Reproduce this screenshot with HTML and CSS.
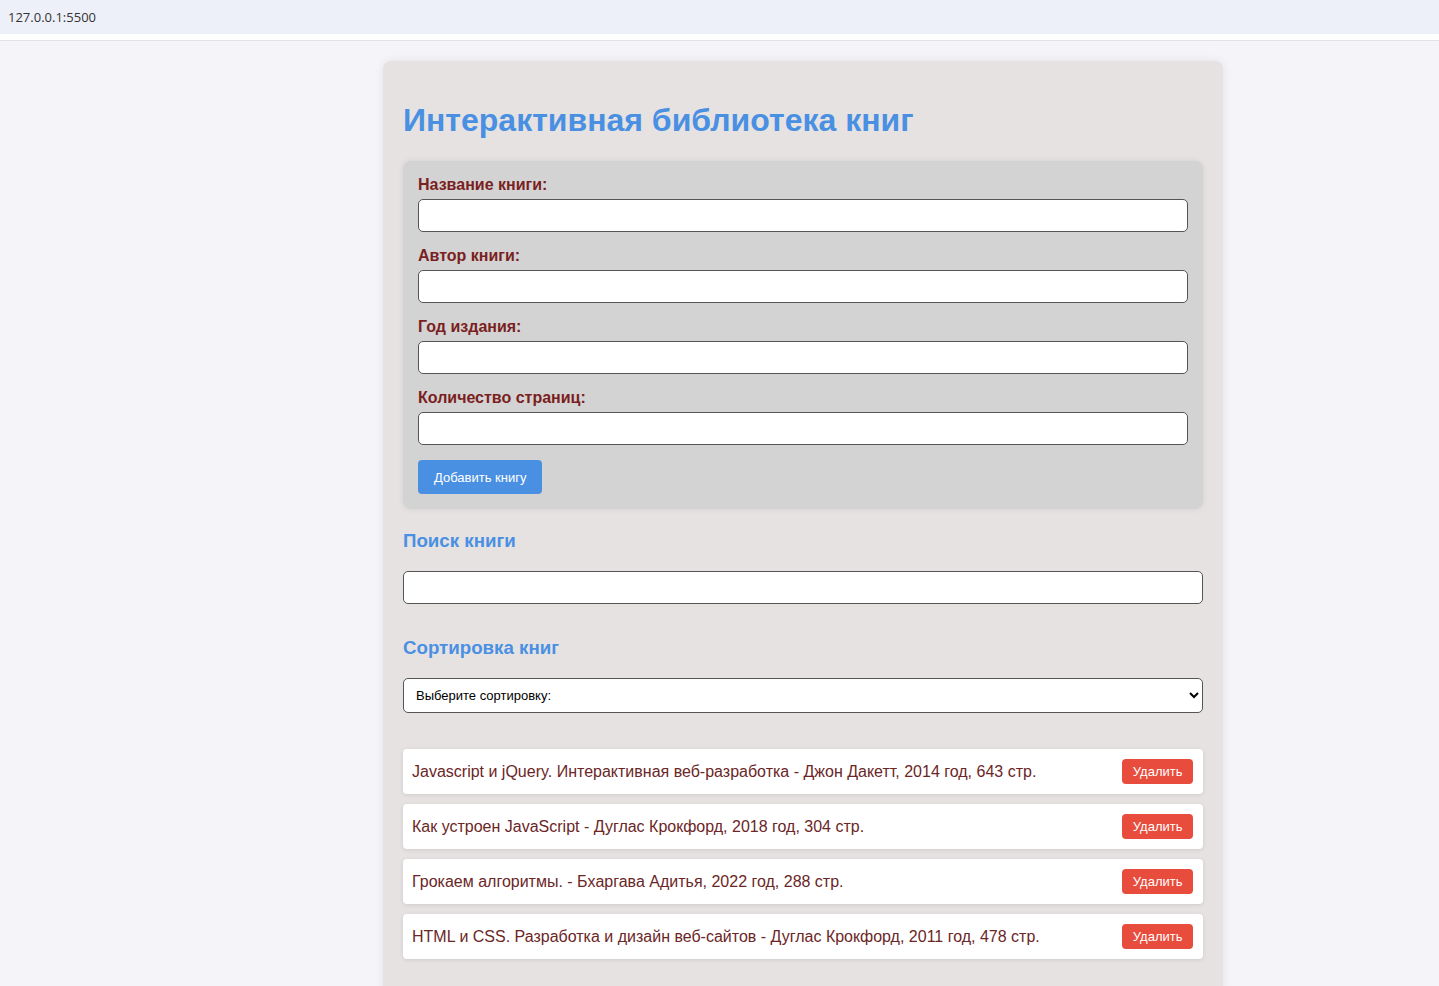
FILE: index.html
```html
<!DOCTYPE html>
<html lang="ru">
<head>
<meta charset="utf-8">
<title>Интерактивная библиотека книг</title>
<link rel="stylesheet" href="styles.css">
</head>
<body>
<div class="addressbar"><span class="url">127.0.0.1:5500</span></div>
<div class="page">
  <div class="container">
    <h1 class="title">Интерактивная библиотека книг</h1>
    <form class="book-form">
      <label class="field-label" for="title">Название книги:</label>
      <input class="field-input" id="title" type="text">
      <label class="field-label" for="author">Автор книги:</label>
      <input class="field-input" id="author" type="text">
      <label class="field-label" for="year">Год издания:</label>
      <input class="field-input" id="year" type="text">
      <label class="field-label" for="pages">Количество страниц:</label>
      <input class="field-input" id="pages" type="text">
      <button type="button" class="add-btn">Добавить книгу</button>
    </form>
    <h2 class="section-title search-title">Поиск книги</h2>
    <input class="search-input" type="text">
    <h2 class="section-title sort-title">Сортировка книг</h2>
    <select class="sort-select">
      <option>Выберите сортировку:</option>
    </select>
    <ul class="book-list">
      <li class="book-item"><span class="book-text">Javascript и jQuery. Интерактивная веб-разработка - Джон Дакетт, 2014 год, 643 стр.</span><button type="button" class="del-btn">Удалить</button></li>
      <li class="book-item"><span class="book-text">Как устроен JavaScript - Дуглас Крокфорд, 2018 год, 304 стр.</span><button type="button" class="del-btn">Удалить</button></li>
      <li class="book-item"><span class="book-text">Грокаем алгоритмы. - Бхаргава Адитья, 2022 год, 288 стр.</span><button type="button" class="del-btn">Удалить</button></li>
      <li class="book-item"><span class="book-text">HTML и CSS. Разработка и дизайн веб-сайтов - Дуглас Крокфорд, 2011 год, 478 стр.</span><button type="button" class="del-btn">Удалить</button></li>
    </ul>
  </div>
</div>
</body>
</html>
```
FILE: styles.css
```css
html, body {
  margin: 0;
  padding: 0;
  background: #f4f4f9;
  font-family: "Liberation Sans", Arial, sans-serif;
}
.addressbar {
  height: 34px;
  background: #edf0f8;
  border-bottom: 6px solid #ffffff;
  box-shadow: 0 1px 0 #e2e2e6;
  display: flex;
  align-items: center;
  padding-left: 8px;
}
.url {
  font-family: "Open Sans", "Noto Sans", sans-serif;
  font-size: 13px;
  color: #333;
}
.page {
  padding-top: 21px;
  height: 925px;
  overflow: hidden;
}
.container {
  width: 800px;
  margin-left: 383px;
  padding: 20px 20px 40px;
  background: #e6e2e2;
  border-radius: 8px;
  box-shadow: 0 0 10px rgba(0,0,0,0.08);
}
.title {
  color: #4a90e2;
  font-size: 32px;
  margin: 21px 0 22px;
  line-height: 37px;
}
.book-form {
  background: #d3d3d3;
  border-radius: 8px;
  padding: 15px;
  box-shadow: 0 0 6px rgba(0,0,0,0.08);
  display: flex;
  flex-direction: column;
  align-items: flex-start;
}
.field-label {
  display: block;
  font-weight: bold;
  font-size: 16px;
  line-height: 18px;
  color: #7a1f1f;
  margin-bottom: 5px;
}
.field-input {
  box-sizing: border-box;
  width: 100%;
  height: 33px;
  border: 1px solid #555;
  border-radius: 5px;
  background: #fff;
  margin: 0 0 15px;
  padding: 0 8px;
  font-size: 14px;
}
.add-btn {
  height: 34px;
  padding: 0 16px;
  border: none;
  border-radius: 4px;
  background: #4a90e2;
  color: #fff;
  font-family: "Liberation Sans", Arial, sans-serif;
  font-size: 13px;
}
.section-title {
  color: #4a90e2;
  font-size: 18.72px;
  line-height: 23px;
}
.search-title {
  margin: 20px 0 19px;
}
.search-input {
  box-sizing: border-box;
  display: block;
  width: 100%;
  height: 33px;
  border: 1px solid #555;
  border-radius: 5px;
  background: #fff;
  margin: 0;
  padding: 0 8px;
}
.sort-title {
  margin: 32px 0 19px;
}
.sort-select {
  box-sizing: border-box;
  display: block;
  width: 100%;
  height: 35px;
  border: 1px solid #555;
  border-radius: 5px;
  background: #fff;
  padding: 0 8px;
  font-family: "Liberation Sans", Arial, sans-serif;
  font-size: 13px;
  color: #000;
}
.book-list {
  list-style: none;
  margin: 36px 0 0;
  padding: 0;
  display: flex;
  flex-direction: column;
  gap: 10px;
}
.book-item {
  background: #fff;
  border-radius: 4px;
  padding: 10px 10px 10px 9px;
  display: flex;
  justify-content: space-between;
  align-items: center;
  box-shadow: 0 1px 4px rgba(0,0,0,0.1);
}
.book-text {
  font-size: 16px;
  color: #6b2626;
}
.del-btn {
  height: 25px;
  padding: 0 10.5px;
  border: none;
  border-radius: 4px;
  background: #e74c3c;
  color: #fff;
  font-family: "Liberation Sans", Arial, sans-serif;
  font-size: 13px;
}
```
